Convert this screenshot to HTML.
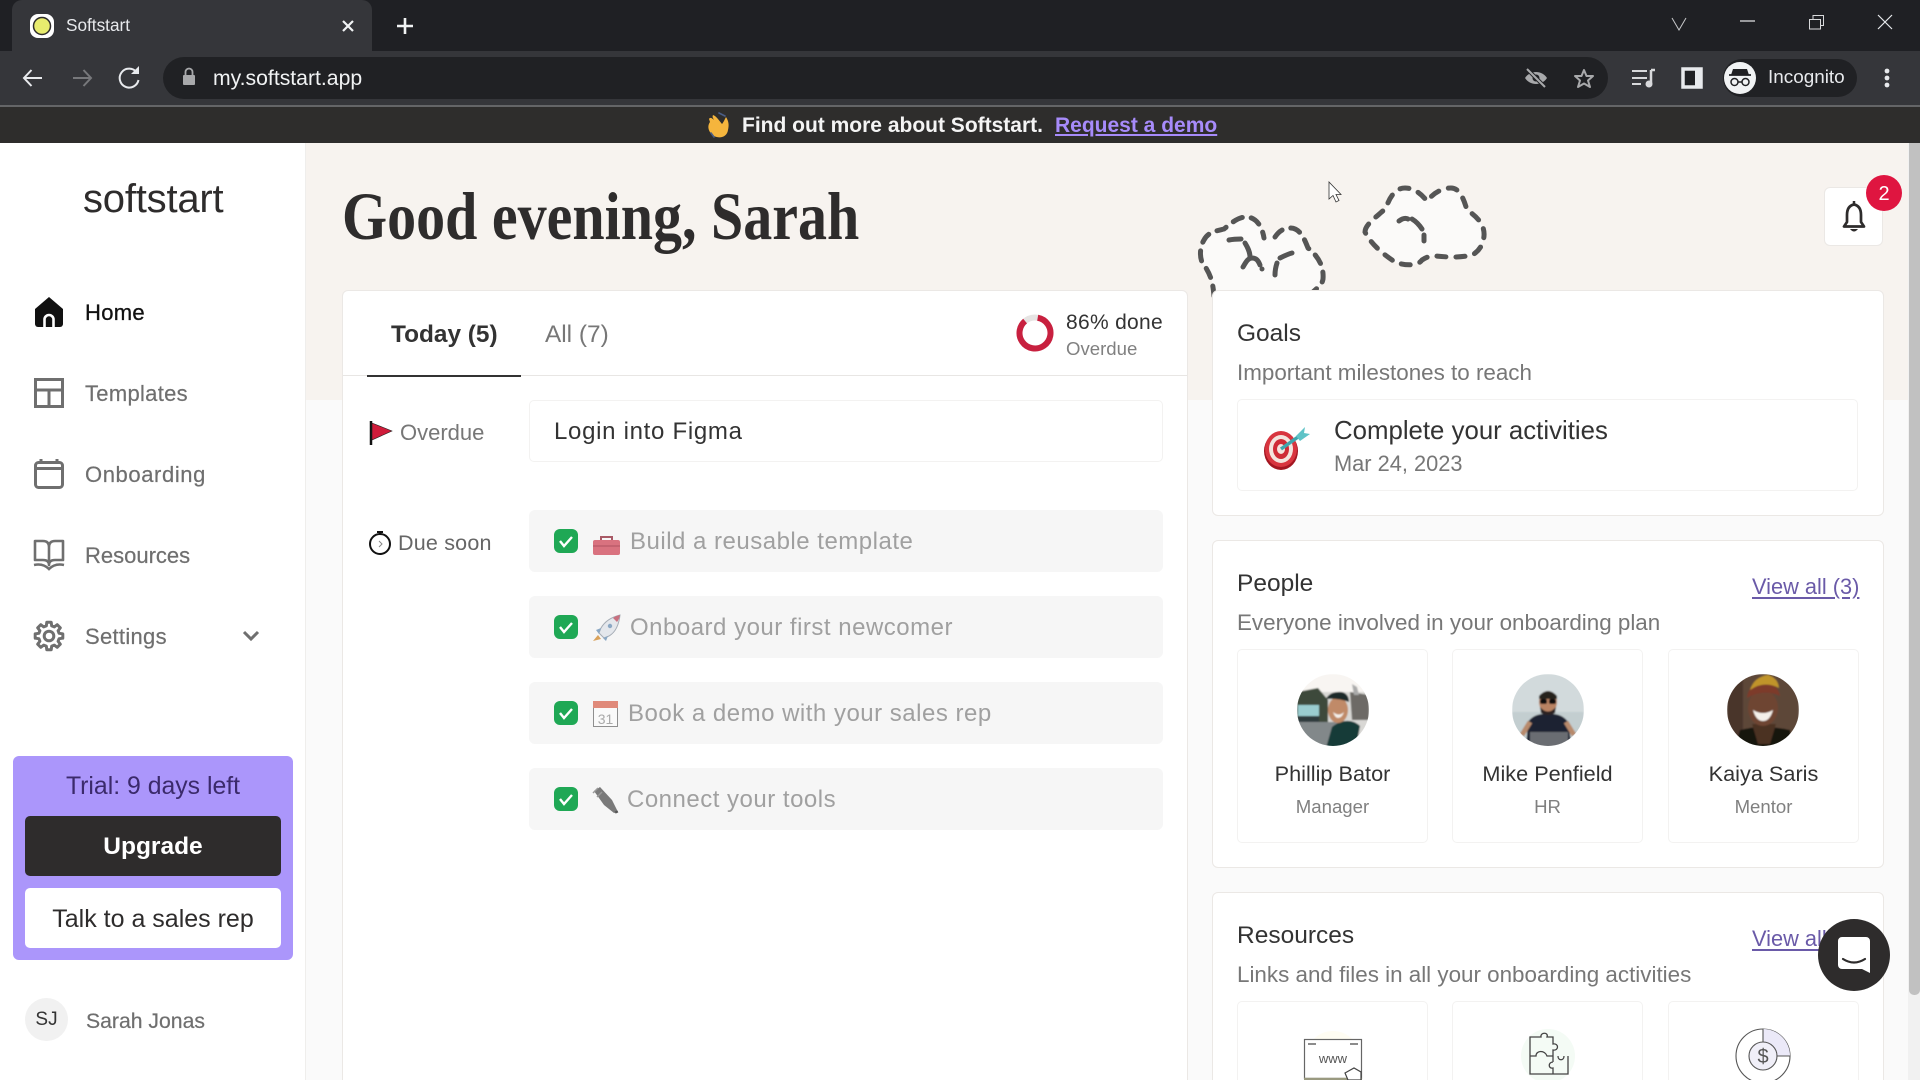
<!DOCTYPE html>
<html lang="en"><head><meta charset="utf-8"><title>Softstart</title>
<style>
html,body{margin:0;padding:0;width:1920px;height:1080px;overflow:hidden;background:#fafafa}
body{position:relative;font-family:"Liberation Sans",sans-serif;color:#2e2c2c}
div,a,svg{position:absolute}
.t{white-space:nowrap;line-height:30px;height:30px}
.box{box-sizing:border-box;background:#fff;border:1px solid #ebe8e5;border-radius:6px}
.in{box-sizing:border-box;background:#fff;border:1px solid #f3f2f1;border-radius:5px}
.row{left:529px;width:634px;height:62px;background:#f6f6f6;border-radius:6px}
.chk{left:554px;width:24px;height:24px;background:#1fa855;border-radius:6px}
.task{left:630px;font-size:24px;letter-spacing:.5px;color:#a0a0a0}
.nav{left:85px;font-size:22px;letter-spacing:.3px;color:#6f6f6f;-webkit-text-stroke:.2px #6f6f6f}
.c{text-align:center}
.link{font-size:21.8px;color:#6a5aa8;text-decoration:underline;text-underline-offset:3px}
.h{font-size:24.5px;color:#333}
.s{font-size:22.4px;color:#777}
</style></head><body>

<!-- browser chrome -->
<div style="left:0;top:0;width:1920px;height:51px;background:#1f2024"></div>
<div style="left:12px;top:0;width:360px;height:51px;background:#35363a;border-radius:10px 10px 0 0"></div>
<div style="left:0;top:51px;width:1920px;height:54px;background:#35363a"></div>
<div style="left:0;top:105px;width:1920px;height:2px;background:#646567"></div>
<div style="left:0;top:107px;width:1920px;height:36px;background:#2e2d2c"></div>
<div style="left:163px;top:57px;width:1445px;height:42px;background:#202124;border-radius:21px"></div>
<div style="left:1723px;top:59px;width:134px;height:38px;background:#202124;border-radius:19px"></div>
<div class="t" style="left:66px;top:10px;font-size:17.2px;color:#e8eaed">Softstart</div>
<div class="t" style="left:213px;top:64px;font-size:21.2px;color:#f1f3f4">my.softstart.app</div>
<div class="t" style="left:1768px;top:63px;font-size:18.9px;color:#e8eaed">Incognito</div>

<!-- banner -->
<div class="t" style="left:742px;top:111px;font-size:21px;font-weight:700;color:#f4f4f4">Find out more about Softstart.</div>
<a class="t" style="left:1055px;top:111px;font-size:21px;font-weight:700;color:#a78bfa;text-decoration:underline">Request a demo</a>

<!-- sidebar -->
<div style="left:0;top:143px;width:305px;height:937px;background:#fff;border-right:1px solid #efeeec"></div>
<div class="t" style="left:83px;top:184px;font-size:40px;letter-spacing:-.2px;color:#2e2c2c">softstart</div>
<div class="t nav" style="top:298px;color:#111;-webkit-text-stroke:.3px #111">Home</div>
<div class="t nav" style="top:379px">Templates</div>
<div class="t nav" style="top:460px;letter-spacing:.6px">Onboarding</div>
<div class="t nav" style="top:541px;letter-spacing:0">Resources</div>
<div class="t nav" style="top:622px">Settings</div>

<div style="left:13px;top:756px;width:280px;height:204px;background:#ab96fb;border-radius:6px"></div>
<div class="t c" style="left:13px;top:772px;width:280px;font-size:24.8px;color:#3b2a6b">Trial: 9 days left</div>
<div style="left:25px;top:816px;width:256px;height:60px;background:#2e2c2c;border-radius:5px"></div>
<div class="t c" style="left:25px;top:832px;width:256px;font-size:24.5px;font-weight:700;color:#fff">Upgrade</div>
<div style="left:25px;top:888px;width:256px;height:60px;background:#fff;border-radius:5px"></div>
<div class="t c" style="left:25px;top:904px;width:256px;font-size:25px;color:#2e2c2c">Talk to a sales rep</div>
<div style="left:25px;top:998px;width:43px;height:43px;background:#f1f1f1;border-radius:50%"></div>
<div class="t c" style="left:25px;top:1005px;width:43px;font-size:19px;color:#333">SJ</div>
<div class="t" style="left:86px;top:1007px;font-size:21.2px;color:#6f6f6f;-webkit-text-stroke:.2px #6f6f6f">Sarah Jonas</div>

<!-- main bg -->
<div style="left:306px;top:143px;width:1602px;height:257px;background:#f7f3ef"></div>
<div style="left:306px;top:400px;width:1602px;height:680px;background:#fafafa"></div>
<div style="left:1908px;top:143px;width:12px;height:937px;background:#f1f1f1"></div>
<div style="left:1909px;top:143px;width:11px;height:852px;background:#c1c1c1;border-radius:0 0 5px 5px"></div>

<div class="t" style="left:342px;top:201px;font-family:'Liberation Serif',serif;font-weight:700;font-size:68px;color:#2e2c2c;transform:scaleX(.853);transform-origin:0 50%">Good evening, Sarah</div>

<!-- clouds (behind cards) -->
<svg style="left:0;top:0" width="1920" height="1080" viewBox="0 0 1920 1080" fill="none">
<path d="M1214 296C1213 285 1212 278 1206 268C1199 262 1199 248 1204 240C1208 232 1216 231 1224 229C1230 224 1238 217 1246 217C1256 217 1262 226 1264 238C1268 236 1276 228 1290 228C1300 228 1304 238 1308 248C1318 256 1324 266 1323 279C1322 286 1316 288 1309 296Z" fill="#fbfaf9"/>
<path d="M1214 296C1213 285 1212 278 1206 268C1199 262 1199 248 1204 240C1208 232 1216 231 1224 229C1230 224 1238 217 1246 217C1256 217 1262 226 1264 238M1275 237C1279 231 1284 228 1290 228C1300 228 1304 238 1308 248C1318 256 1324 266 1323 279C1322 286 1316 288 1309 296" stroke="#555" stroke-width="5" stroke-linecap="round" stroke-dasharray="10 9"/>
<path d="M1229 240C1234 239 1238 239 1241 239M1245 243C1248 248 1250 252 1250 257M1243 267C1246 262 1248 258 1252 258C1256 258 1258 260 1260 265M1262 269L1262 269M1275 275C1275 270 1276 266 1277 263M1280 258C1284 256 1288 254 1292 253" stroke="#555" stroke-width="5" stroke-linecap="round"/>
<path d="M1365 232C1365 224 1378 216 1386 208C1390 196 1396 188 1405 188C1415 188 1422 195 1427 201C1432 195 1440 188 1451 188C1460 188 1464 200 1467 210C1476 216 1485 224 1484 236C1483 246 1478 252 1472 255C1460 258 1445 257 1436 256C1428 256 1425 258 1422 260C1418 266 1405 266 1395 262C1386 256 1372 246 1365 232Z" fill="#fbfaf9" stroke="#555" stroke-width="5" stroke-linecap="round" stroke-dasharray="9 10"/>
<path d="M1399 221C1403 218 1406 218 1408 219M1412 219C1417 222 1420 226 1422 229M1424 235V241" stroke="#555" stroke-width="5" stroke-linecap="round"/>
</svg>

<!-- task card -->
<div class="box" style="left:342px;top:290px;width:846px;height:800px"></div>
<div style="left:343px;top:375px;width:844px;height:1px;background:#e8e6e4"></div>
<div style="left:367px;top:375px;width:154px;height:2px;background:#333"></div>
<div class="t" style="left:391px;top:320px;font-size:24.4px;font-weight:700;color:#333">Today (5)</div>
<div class="t" style="left:545px;top:320px;font-size:24.4px;color:#777">All (7)</div>
<div class="t" style="left:1066px;top:308px;font-size:21px;color:#333;letter-spacing:.3px">86% done</div>
<div class="t" style="left:1066px;top:334px;font-size:18.6px;color:#808080">Overdue</div>
<div class="t" style="left:400px;top:418px;font-size:22px;color:#777">Overdue</div>
<div class="in" style="left:529px;top:400px;width:634px;height:62px"></div>
<div class="t" style="left:554px;top:417px;font-size:24px;color:#333;letter-spacing:.7px">Login into Figma</div>
<div class="t" style="left:398px;top:528px;font-size:21.5px;color:#666;letter-spacing:.2px">Due soon</div>

<div class="row" style="top:510px"></div>
<div class="row" style="top:596px"></div>
<div class="row" style="top:682px"></div>
<div class="row" style="top:768px"></div>
<div class="chk" style="top:529px"></div>
<div class="chk" style="top:615px"></div>
<div class="chk" style="top:701px"></div>
<div class="chk" style="top:787px"></div>
<div class="t task" style="top:527px">Build a reusable template</div>
<div class="t task" style="top:613px">Onboard your first newcomer</div>
<div class="t task" style="left:628px;top:699px">Book a demo with your sales rep</div>
<div class="t task" style="left:627px;top:785px">Connect your tools</div>

<!-- bell box -->
<div class="box" style="left:1824px;top:187px;width:59px;height:59px"></div>

<!-- goals -->
<div class="box" style="left:1212px;top:290px;width:672px;height:226px"></div>
<div class="t h" style="left:1237px;top:319px">Goals</div>
<div class="t s" style="left:1237px;top:358px">Important milestones to reach</div>
<div class="in" style="left:1237px;top:399px;width:621px;height:92px"></div>
<div class="t" style="left:1334px;top:416px;font-size:25.8px;color:#333">Complete your activities</div>
<div class="t" style="left:1334px;top:449px;font-size:21.8px;color:#777">Mar 24, 2023</div>

<!-- people -->
<div class="box" style="left:1212px;top:540px;width:672px;height:328px"></div>
<div class="t h" style="left:1237px;top:569px">People</div>
<a class="t link" style="left:1752px;top:572px">View all (3)</a>
<div class="t s" style="left:1237px;top:608px">Everyone involved in your onboarding plan</div>
<div class="in" style="left:1237px;top:649px;width:191px;height:194px"></div>
<div class="in" style="left:1452px;top:649px;width:191px;height:194px"></div>
<div class="in" style="left:1668px;top:649px;width:191px;height:194px"></div>
<div class="t c" style="left:1237px;top:759px;width:191px;font-size:21.7px;color:#333">Phillip Bator</div>
<div class="t c" style="left:1452px;top:759px;width:191px;font-size:21.7px;color:#333">Mike Penfield</div>
<div class="t c" style="left:1668px;top:759px;width:191px;font-size:21.7px;color:#333">Kaiya Saris</div>
<div class="t c" style="left:1237px;top:792px;width:191px;font-size:18.6px;color:#808080">Manager</div>
<div class="t c" style="left:1452px;top:792px;width:191px;font-size:18.6px;color:#808080">HR</div>
<div class="t c" style="left:1668px;top:792px;width:191px;font-size:18.6px;color:#808080">Mentor</div>

<!-- resources -->
<div class="box" style="left:1212px;top:892px;width:672px;height:220px"></div>
<div class="t h" style="left:1237px;top:921px">Resources</div>
<a class="t link" style="left:1752px;top:924px">View all (3)</a>
<div class="t s" style="left:1237px;top:960px">Links and files in all your onboarding activities</div>
<div class="in" style="left:1237px;top:1001px;width:191px;height:100px"></div>
<div class="in" style="left:1452px;top:1001px;width:191px;height:100px"></div>
<div class="in" style="left:1668px;top:1001px;width:191px;height:100px"></div>

<!-- icon overlay -->
<svg style="left:0;top:0;overflow:hidden" width="1920" height="1080" viewBox="0 0 1920 1080" fill="none">
<defs>
<clipPath id="a1"><circle cx="1333" cy="710" r="36"/></clipPath>
<clipPath id="a2"><circle cx="1548" cy="710" r="36"/></clipPath>
<clipPath id="a3"><circle cx="1763" cy="710" r="36"/></clipPath>
<filter id="b1"><feGaussianBlur stdDeviation=".7"/></filter>
</defs>

<!-- favicon -->
<rect x="30" y="14" width="24" height="24" rx="8" fill="#fff"/>
<circle cx="42" cy="26" r="8.5" fill="#e8ec6e" stroke="#2e2c2c" stroke-width="1.5"/>
<!-- tab close, plus -->
<path d="M343 21L353 31M353 21L343 31" stroke="#f1f3f4" stroke-width="2.2"/>
<path d="M405 18V34M397 26H413" stroke="#f1f3f4" stroke-width="2.6"/>
<!-- nav -->
<path d="M42 78H24M31.500 70L24 78L31.500 86" stroke="#e8eaed" stroke-width="2"/>
<path d="M91 78H73M83.500 70L91 78L83.500 86" stroke="#77787b" stroke-width="2"/>
<path d="M136.500 72A9.500 9.500 0 1 0 138.500 80" stroke="#e8eaed" stroke-width="2"/>
<path d="M139 66V74H131Z" fill="#e8eaed"/>
<rect x="183" y="75" width="12" height="10" rx="1" fill="#a8a9ab"/>
<path d="M185.500 75V72A3.500 3.500 0 0 1 192.500 72V75" stroke="#a8a9ab" stroke-width="1.800"/>
<!-- window controls -->
<path d="M1672 18L1679 30L1686 18" stroke="#c8c9cb" stroke-width="1"/>
<path d="M1740 21H1755" stroke="#e8eaed" stroke-width="1.200"/>
<rect x="1809.500" y="19.500" width="11" height="9.500" stroke="#d8d9db"/>
<path d="M1813 19.500V15.500H1823.500V25.500H1820.500" stroke="#d8d9db"/>
<path d="M1878 15L1892 29M1892 15L1878 29" stroke="#e8eaed" stroke-width="1.200"/>
<!-- eye off -->
<path d="M1525 78C1530 70 1542 70 1547 78C1542 86 1530 86 1525 78Z" fill="#a8a9ab"/>
<circle cx="1536" cy="78" r="3.500" fill="#202124"/>
<path d="M1528 70L1546 88" stroke="#202124" stroke-width="4"/><path d="M1527 69L1545 87" stroke="#a8a9ab" stroke-width="2"/>
<!-- star -->
<path d="M1584 70L1586.500 76H1593L1588 80.500L1590 87L1584 83.500L1578 87L1580 80.500L1575 76H1581.500Z" stroke="#a8a9ab" stroke-width="2" stroke-linejoin="round"/>
<!-- media -->
<path d="M1632 71H1647M1632 78H1647M1632 84H1641" stroke="#d8d9db" stroke-width="2"/>
<path d="M1651 70H1655M1651 70V84" stroke="#d8d9db" stroke-width="2.500"/><circle cx="1649" cy="84" r="3.500" fill="#d8d9db"/>
<!-- side panel -->
<rect x="1683" y="69" width="18" height="18" fill="#202124" stroke="#e8eaed" stroke-width="3.500"/>
<path d="M1695 69H1702V87H1695Z" fill="#e8eaed"/>
<!-- incognito -->
<circle cx="1740" cy="78" r="16" fill="#f1f3f4"/>
<path d="M1733 69H1747L1749 75H1731Z" fill="#202124"/><path d="M1729 75H1751" stroke="#202124" stroke-width="1.800"/>
<circle cx="1734.500" cy="82" r="3.500" stroke="#202124" stroke-width="1.500"/><circle cx="1745.500" cy="82" r="3.500" stroke="#202124" stroke-width="1.500"/><path d="M1738 82H1742" stroke="#202124" stroke-width="1.500"/>
<circle cx="1887" cy="71" r="2.400" fill="#e8eaed"/><circle cx="1887" cy="78" r="2.400" fill="#e8eaed"/><circle cx="1887" cy="85" r="2.400" fill="#e8eaed"/>

<!-- wave emoji -->
<g stroke-linecap="round">
<path d="M710 122C707 126 708 132 714 136C720 139 727 137 728 130C729 125 729 122 726 117C724 121 723 123 722 124C718 119 716 116 713 115C712 117 713 118 714 120C712 118 710 117 709 119Z" fill="#f5b53d"/>
<path d="M719 113L725 116M711 133L714 137" stroke="#4a5d86" stroke-width="1.600"/>
</g>

<!-- sidebar icons -->
<path d="M49 297L63 309V324A3 3 0 0 1 60 327H38A3 3 0 0 1 35 324V309Z" fill="#111"/>
<path d="M44.500 327V319.500A4.500 4.500 0 0 1 53.500 319.500V327" stroke="#fff" stroke-width="2.600"/>
<rect x="35.500" y="379.500" width="27" height="27" stroke="#6f6f6f" stroke-width="3"/>
<path d="M35 390H63M49 390V406" stroke="#6f6f6f" stroke-width="3"/>
<rect x="35.500" y="462.500" width="27" height="25" rx="3" stroke="#6f6f6f" stroke-width="3"/>
<path d="M35 468.500H63M41 459V463M57 459V463" stroke="#6f6f6f" stroke-width="3"/>
<path d="M35 541H43Q49 541 49 547V565Q49 560 43 560H35ZM63 541H55Q49 541 49 547V565Q49 560 55 560H63Z" stroke="#6f6f6f" stroke-width="2.600" stroke-linejoin="round"/>
<path d="M34 565Q43 563 49 569Q55 563 64 565" stroke="#6f6f6f" stroke-width="2.600"/>
<g transform="translate(49,636)" stroke="#6f6f6f" stroke-width="3" stroke-linejoin="round">
<path d="M10.100-2.700L13.800-2.200L13.800 2.200L10.100 2.700L9.100 5.250L11.300 8.200L8.200 11.300L5.250 9.100L2.700 10.100L2.200 13.800L-2.200 13.800L-2.700 10.100L-5.250 9.100L-8.200 11.300L-11.300 8.200L-9.100 5.250L-10.100 2.700L-13.800 2.200L-13.800-2.200L-10.100-2.700L-9.100-5.250L-11.300-8.200L-8.200-11.300L-5.250-9.100L-2.700-10.100L-2.200-13.800L2.200-13.800L2.700-10.100L5.250-9.100L8.200-11.300L11.300-8.200L9.100-5.250Z"/>
<circle r="4.800"/></g>
<path d="M244 632L251 639L258 632" stroke="#6f6f6f" stroke-width="3"/>

<!-- progress ring -->
<circle cx="1035" cy="333" r="15.500" stroke="#e6e4e3" stroke-width="6"/>
<circle cx="1035" cy="333" r="15.500" stroke="#c8203f" stroke-width="6" stroke-dasharray="83.800 13.600" transform="rotate(-80 1035 333)"/>

<!-- flag -->
<path d="M371 421V445" stroke="#111" stroke-width="2.500"/>
<path d="M372 423L392 431L372 440Z" fill="#cf1b3a" stroke="#222" stroke-width=".6"/>
<!-- stopwatch -->
<ellipse cx="380" cy="544" rx="10" ry="10" stroke="#111" stroke-width="2"/>
<path d="M377 532H383M380 532V534" stroke="#111" stroke-width="2"/>
<path d="M379 541L382 544L379 547" stroke="#888" stroke-width="1"/>

<!-- checks -->
<g stroke="#fff" stroke-width="2.400"><path d="M560 541L564 546L572 537"/><path d="M560 627L564 632L572 623"/><path d="M560 713L564 718L572 709"/><path d="M560 799L564 804L572 795"/></g>

<!-- emoji icons -->
<path d="M601 543V537H612V543" stroke="#a85a66" stroke-width="2"/>
<rect x="593" y="540" width="27" height="15" rx="2" fill="#d9727f"/>
<path d="M593 546H620" stroke="#b95a68" stroke-width="1.200"/>
<!-- rocket -->
<path d="M620 615C612 617 605 621 601 628L599 633L604 638L609 636C616 632 619 624 620 615Z" fill="#e4e7ec" stroke="#a5acb5"/>
<path d="M620 615C617 615.500 615 616.500 613 618L617 622C618.500 620 619.500 618 620 615Z" fill="#c9707f"/>
<path d="M601 628L596 630L599 634ZM608 636L606 641L603 638Z" fill="#8ba8c4"/>
<path d="M598 635L593 641L601 639Z" fill="#d9a25b"/>
<circle cx="610" cy="626" r="2.200" fill="#8ba8c4"/>
<!-- calendar -->
<rect x="593.500" y="701.500" width="24" height="25" fill="#fafafa" stroke="#8f8f8f"/>
<rect x="593" y="701" width="25" height="7" fill="#e08a7a"/>
<text x="605.500" y="724" text-anchor="middle" font-family="Liberation Sans,sans-serif" font-size="14" fill="#aaa">31</text>
<!-- plug -->
<path d="M594 791L600 787L612 800L618 812L614 813L604 805Z" fill="#7a7a7a"/>
<path d="M593 793L598 788M597 797L602 792" stroke="#999" stroke-width="1.500"/>
<path d="M616 811L617 813" stroke="#555" stroke-width="3"/>

<!-- bell -->
<path d="M1854 204.500C1849 205.500 1847 209 1847 215V222L1844 226.500H1864L1861 222V215C1861 209 1859 205.500 1854 204.500Z" stroke="#2e2c2c" stroke-width="2.700" stroke-linejoin="round"/>
<path d="M1854 201V204" stroke="#2e2c2c" stroke-width="2.500"/>
<path d="M1850 229Q1854 234 1858 229Z" fill="#2e2c2c"/>
<circle cx="1884" cy="193" r="18" fill="#df1540"/>
<text x="1884" y="200" text-anchor="middle" font-family="Liberation Sans,sans-serif" font-size="20" fill="#fff">2</text>

<!-- target -->
<ellipse cx="1281" cy="451" rx="17" ry="19" fill="#a31621"/>
<ellipse cx="1281" cy="449" rx="16" ry="18" fill="#d8353f"/>
<ellipse cx="1281" cy="449" rx="12" ry="14" fill="#f4e4de"/>
<ellipse cx="1281" cy="449" rx="8" ry="10" fill="#cf2b36"/>
<ellipse cx="1281" cy="449" rx="4" ry="5" fill="#f4e4de"/>
<path d="M1281 449L1298 437" stroke="#3fa5ad" stroke-width="3.500"/>
<path d="M1296 436L1305 427L1304 433L1310 434L1300 441Z" fill="#5fc3c7"/>

<!-- avatars -->
<g clip-path="url(#a1)" filter="url(#b1)">
<rect x="1297" y="674" width="72" height="72" fill="#d9d8d5"/>
<rect x="1297" y="674" width="72" height="18" fill="#f8f5f2"/>
<path d="M1297 692L1318 688L1328 700L1328 722H1297Z" fill="#3d4a3a"/>
<rect x="1298" y="705" width="21" height="11" fill="#9acdd0"/>
<rect x="1298" y="716" width="21" height="6" fill="#2f3a3e"/>
<path d="M1297 722H1345V746H1297Z" fill="#82888a"/>
<path d="M1350 692L1369 695V720H1352Z" fill="#6d6a66"/>
<path d="M1352 684l5 3 2 8-5 0Z" fill="#aaa"/>
<path d="M1326 748L1332 727C1340 720 1352 718 1360 726L1356 748Z" fill="#163a38"/>
<ellipse cx="1338" cy="710" rx="10" ry="13" fill="#c08a68"/>
<path d="M1333 712q6 5 11 0q-2 6-6 6q-3 0-5-6Z" fill="#f5f0ea"/>
<path d="M1326 699Q1330 691 1342 692Q1349 694 1349 702Q1338 698 1326 699Z" fill="#1e2a2c"/>
</g>
<g clip-path="url(#a2)" filter="url(#b1)">
<rect x="1512" y="674" width="72" height="72" fill="#d2dadc"/>
<rect x="1512" y="712" width="72" height="34" fill="#c3ced0"/>
<path d="M1526 748L1528 722Q1534 713 1548 714Q1562 713 1568 722L1572 748Z" fill="#1f2433"/>
<rect x="1530" y="732" width="38" height="16" fill="#6b6d72"/>
<path d="M1522 735L1530 722M1574 735L1566 722" stroke="#b88a6c" stroke-width="5"/>
<ellipse cx="1548" cy="702" rx="9" ry="11" fill="#b98364"/>
<path d="M1539 696Q1548 686 1557 696L1557 699H1539Z" fill="#26201e"/>
<path d="M1540 707Q1548 716 1556 707L1555 713Q1548 717 1541 713Z" fill="#2b2422"/>
<rect x="1540" y="699" width="7" height="5" rx="2" fill="#111"/><rect x="1549" y="699" width="7" height="5" rx="2" fill="#111"/>
</g>
<g clip-path="url(#a3)" filter="url(#b1)">
<rect x="1727" y="674" width="72" height="72" fill="#5d4638"/>
<rect x="1727" y="674" width="16" height="72" fill="#4a362a"/>
<path d="M1735 748L1740 730Q1764 724 1790 730L1792 748Z" fill="#151210"/>
<path d="M1752 724L1776 724L1770 744H1758Z" fill="#4c3124"/>
<ellipse cx="1763" cy="708" rx="15" ry="18" fill="#6e4433"/>
<path d="M1747 698Q1748 684 1764 682Q1778 684 1780 696Q1764 688 1747 698Z" fill="#7d3a2a"/>
<path d="M1750 690Q1754 677 1768 675Q1778 678 1779 688Q1764 680 1750 690Z" fill="#c0942c"/>
<path d="M1753 710Q1763 716 1773 710Q1770 721 1763 721Q1756 721 1753 710Z" fill="#f4f0ea"/>
</g>

<!-- resource icons -->
<circle cx="1333" cy="1058" r="27" fill="#fffdf3"/>
<rect x="1304.500" y="1039.500" width="57" height="39" fill="#fff" stroke="#666" stroke-width="1.200"/>
<path d="M1304 1079H1362" stroke="#9a9a80" stroke-width="2.500"/>
<path d="M1308 1044H1316M1350 1044H1358" stroke="#666" stroke-width="1.500"/>
<text x="1333" y="1063" text-anchor="middle" font-family="Liberation Sans,sans-serif" font-size="13" fill="#555">www</text>
<path d="M1345 1073L1354 1068L1361 1072L1361 1080H1348Z" fill="#fff" stroke="#444" stroke-width="1.200"/>
<circle cx="1548" cy="1056" r="27" fill="#f4fbf5"/>
<path d="M1530 1037H1541C1540 1032 1549 1032 1547 1037H1553V1044C1559 1043 1559 1051 1553 1050V1056H1547C1545 1050 1536 1050 1536 1056H1530ZM1553 1056V1062M1568 1056V1074H1553V1068C1548 1069 1548 1062 1553 1062M1530 1056V1074H1553M1558 1056C1558 1061 1564 1061 1564 1056" stroke="#444" stroke-width="1.300"/>
<circle cx="1763" cy="1056" r="27" stroke="#555" stroke-width="1.100"/>
<path d="M1763 1029A27 27 0 0 1 1790 1056H1777A14 14 0 0 0 1763 1042Z" fill="#ebe9f8"/>
<path d="M1763 1029V1042M1777 1056H1790" stroke="#555" stroke-width="1.100"/>
<circle cx="1763" cy="1056" r="14" fill="#f0eff8" stroke="#555" stroke-width="1.100"/>
<text x="1763" y="1063" text-anchor="middle" font-family="Liberation Sans,sans-serif" font-size="20" fill="#555">$</text>

<!-- chat -->
<circle cx="1854" cy="955" r="36" fill="#2e2c2c"/>
<path d="M1842 937H1866A4 4 0 0 1 1870 941V973L1862 969H1842A4 4 0 0 1 1838 965V941A4 4 0 0 1 1842 937Z" fill="#fff"/>
<path d="M1843 959Q1854 966 1865 959" stroke="#2e2c2c" stroke-width="2.200" stroke-linecap="round"/>

<!-- cursor -->
<path d="M1329 182V199L1333 195.500L1336 202L1339 200.500L1336 194.500H1341Z" fill="#fff" stroke="#333" stroke-width=".8"/>
</svg>
</body></html>
